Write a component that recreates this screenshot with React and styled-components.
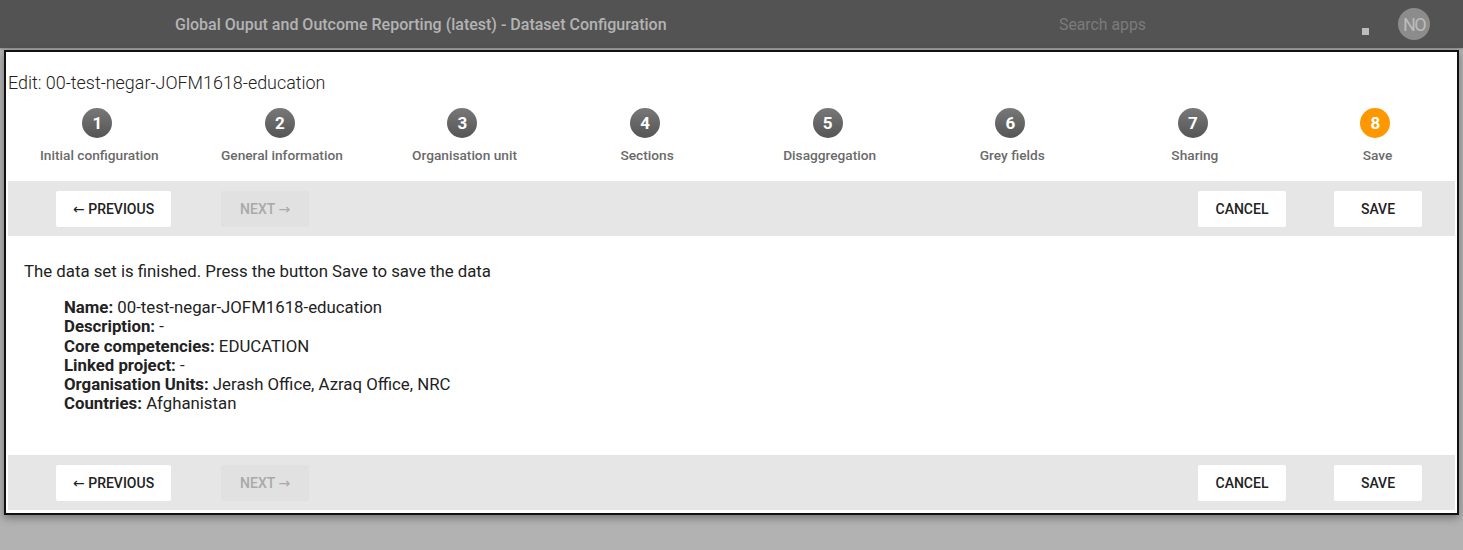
import React from 'react';
import styled, { createGlobalStyle } from 'styled-components';

const GlobalStyle = createGlobalStyle`
	html, body {
		margin: 0;
		padding: 0;
		font-family: Roboto, "Liberation Sans", sans-serif;
	}
`;

const steps = [
	'Initial configuration',
	'General information',
	'Organisation unit',
	'Sections',
	'Disaggregation',
	'Grey fields',
	'Sharing',
	'Save',
];

const summary = [
	['Name', '00-test-negar-JOFM1618-education'],
	['Description', '-'],
	['Core competencies', 'EDUCATION'],
	['Linked project', '-'],
	['Organisation Units', 'Jerash Office, Azraq Office, NRC'],
	['Countries', 'Afghanistan'],
];

const ButtonBar = () => (
	<Bar>
		<Button>
			<Arrow>←</Arrow> PREVIOUS
		</Button>
		<Button disabled>
			NEXT <Arrow>→</Arrow>
		</Button>
		<Spacer />
		<Button>CANCEL</Button>
		<Button>SAVE</Button>
	</Bar>
);

const App = () => {
	return (
		<Page>
			<GlobalStyle />
			<Header>
				<AppTitle>Global Ouput and Outcome Reporting (latest) - Dataset Configuration</AppTitle>
				<Search>Search apps</Search>
				<AppsDot />
				<Avatar>NO</Avatar>
			</Header>
			<Backdrop>
				<Dialog>
					<Title>Edit: 00-test-negar-JOFM1618-education</Title>
					<Stepper>
						{steps.map((label, i) => (
							<Step key={label}>
								<StepCircle active={i === steps.length - 1}>{i + 1}</StepCircle>
								<StepLabel>{label}</StepLabel>
							</Step>
						))}
					</Stepper>
					<ButtonBar />
					<Content>
						<Intro>The data set is finished. Press the button Save to save the data</Intro>
						<Summary>
							{summary.map(([key, value]) => (
								<li key={key}>
									<b>{key}:</b> {value}
								</li>
							))}
						</Summary>
					</Content>
					<ButtonBar />
				</Dialog>
			</Backdrop>
		</Page>
	);
};

let Page = styled.div`
	min-height: 100vh;
	background: #b2b2b2;
`;
let Header = styled.div`
	height: 48px;
	background: #535353;
	display: flex;
	align-items: center;
	box-shadow: 0 1px 2px rgba(0, 0, 0, 0.25);
`;
let AppTitle = styled.div`
	margin-left: 175px;
	width: 884px;
	color: #b3b3b3;
	font-size: 16px;
	font-weight: 500;
`;
let Search = styled.div`
	color: #7b7b7b;
	font-size: 15.8px;
	width: 303px;
`;
let AppsDot = styled.div`
	width: 7px;
	height: 7px;
	background: #bdbdbd;
	margin-top: 14px;
	margin-right: 29px;
`;
let Avatar = styled.div`
	width: 32px;
	height: 32px;
	border-radius: 50%;
	background: #8c8c8c;
	color: #bcbcbc;
	font-size: 18px;
	letter-spacing: -1.5px;
	display: flex;
	align-items: center;
	justify-content: center;
`;
let Backdrop = styled.div`
	padding: 2px 4px 0 4px;
`;
let Dialog = styled.div`
	background: #fff;
	border: 2px solid #111;
	padding: 0 2px 3px 2px;
	box-shadow: 0 3px 8px rgba(0, 0, 0, 0.35);
	overflow: hidden;
`;
let Title = styled.div`
	font-size: 17.9px;
	font-weight: 300;
	color: #222;
	padding-top: 21px;
	line-height: 20px;
`;
let Stepper = styled.div`
	display: grid;
	grid-template-columns: repeat(8, 182.6px);
	margin-left: -2px;
	margin-top: 15px;
	height: 73px;
`;
let Step = styled.div`
	display: flex;
	flex-direction: column;
	align-items: center;
`;
let StepCircle = styled.div`
	width: 30px;
	height: 30px;
	border-radius: 50%;
	background: ${(p) => (p.active ? '#ff9800' : 'linear-gradient(#787878, #555)')};
	color: #fff;
	font-size: 17px;
	font-weight: 700;
	display: flex;
	align-items: center;
	justify-content: center;
`;
let StepLabel = styled.div`
	margin-top: 9px;
	margin-left: 4px;
	font-size: 13.7px;
	font-weight: 500;
	color: #6a6a6a;
`;
let Bar = styled.div`
	background: #e6e6e6;
	height: 55px;
	display: flex;
	align-items: center;
	padding: 0 33px 0 48px;
	gap: 50px;
`;
let Spacer = styled.div`
	flex: 1;
`;
let Button = styled.button`
	min-width: 88px;
	height: 36px;
	padding: 0 16px;
	border: none;
	border-radius: 2px;
	background: ${(p) => (p.disabled ? '#e1e1e1' : '#fff')};
	color: ${(p) => (p.disabled ? '#a9a9a9' : '#222')};
	font-family: Roboto, "Liberation Sans", sans-serif;
	font-size: 14px;
	font-weight: 500;
	&:first-child {
		padding: 0 17px;
	}
	&:nth-child(4) {
		margin-right: -2px;
	}
`;
let Arrow = styled.span`
	font-family: "DejaVu Sans", sans-serif;
	font-weight: 400;
	font-size: 14px;
`;
let Content = styled.div`
	padding: 25px 16px 0 16px;
	height: 194px;
	color: #222;
	font-size: 16.8px;
`;
let Intro = styled.p`
	margin: 0;
	line-height: 20px;
`;
let Summary = styled.ul`
	list-style: none;
	margin: 17px 0 0 0;
	padding: 0 0 0 40px;
	line-height: 19.3px;
	b {
		font-weight: 700;
	}
`;

export default App;
